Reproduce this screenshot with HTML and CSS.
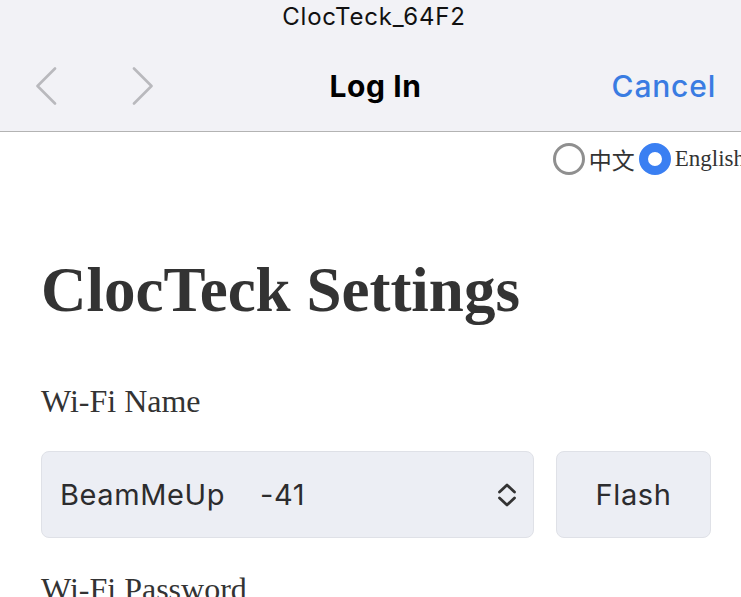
FILE: index.html
```html
<!DOCTYPE html>
<html lang="en">
<head>
<meta charset="utf-8">
<title>ClocTeck Settings</title>
<link rel="stylesheet" href="styles.css">
</head>
<body>
<header class="topbar">
  <div class="status">ClocTeck_64F2</div>
  <nav class="nav">
    <div class="arrows">
      <svg class="chev" width="22" height="38" viewBox="0 0 22 38"><path d="M20 1.5 L2.5 19 L20 36.5" fill="none" stroke="#b9b9bd" stroke-width="2.6" stroke-linecap="round" stroke-linejoin="round"/></svg>
      <svg class="chev" width="22" height="38" viewBox="0 0 22 38"><path d="M2 1.5 L19.5 19 L2 36.5" fill="none" stroke="#b9b9bd" stroke-width="2.6" stroke-linecap="round" stroke-linejoin="round"/></svg>
    </div>
    <div class="nav-title">Log In</div>
    <div class="cancel">Cancel</div>
  </nav>
</header>
<main class="page">
  <div class="lang">
    <label class="opt"><span class="radio"></span>中文</label>
    <label class="opt"><span class="radio on"></span>English</label>
  </div>
  <h1 class="title">ClocTeck Settings</h1>
  <p class="label">Wi-Fi Name</p>
  <div class="row">
    <div class="select">
      <span class="sel-text">BeamMeUp&nbsp;&nbsp;&nbsp;&nbsp;-41</span>
      <svg class="updown" width="20" height="24" viewBox="0 0 20 24"><path d="M2.5 9 L10 2 L17.5 9 M2.5 15 L10 22 L17.5 15" fill="none" stroke="#333" stroke-width="2.8" stroke-linecap="round" stroke-linejoin="round"/></svg>
    </div>
    <button class="btn">Flash</button>
  </div>
  <p class="label">Wi-Fi Password</p>
</main>
</body>
</html>
```
FILE: styles.css
```css
html, body {
  margin: 0;
  padding: 0;
  overflow: hidden;
  background: #ffffff;
}
body {
  font-family: "Liberation Serif", "Times New Roman", serif;
  color: #333333;
}
.topbar {
  background: #f2f2f6;
  border-bottom: 1px solid #b3b3b3;
  font-family: Inter, "Noto Sans", sans-serif;
}
.status {
  height: 36px;
  line-height: 33px;
  font-size: 24px;
  letter-spacing: 0.8px;
  text-align: center;
  color: #111111;
  padding-left: 7px;
}
.nav {
  height: 95px;
  display: grid;
  grid-template-columns: 1fr auto 1fr;
  align-items: center;
  padding: 0 25px 0 35px;
}
.arrows {
  display: flex;
  gap: 75px;
  align-items: center;
  margin-top: 5px;
}
.chev { display: block; }
.nav-title {
  font-size: 30px;
  font-weight: 700;
  letter-spacing: 0.6px;
  color: #000000;
  margin-top: 4px;
}
.cancel {
  justify-self: end;
  font-size: 30px;
  font-weight: 500;
  letter-spacing: 0.8px;
  color: #3a7ce2;
  margin-top: 4px;
}
.page {
  padding: 0 0 0 41px;
}
.lang {
  display: flex;
  justify-content: flex-end;
  align-items: center;
  gap: 4px;
  margin-right: -4px;
  padding-top: 10px;
  font-size: 23px;
  white-space: nowrap;
}
.opt {
  display: flex;
  align-items: center;
  gap: 4px;
  font-family: "Liberation Serif", "Noto Sans CJK SC", serif;
}
.radio {
  width: 32px;
  height: 32px;
  box-sizing: border-box;
  border-radius: 50%;
  border: 3px solid #8f8f8f;
  background: #ffffff;
}
.radio.on {
  border: 9.5px solid #3a7ff2;
  background: #ffffff;
}
.title {
  margin: 78px 0 0 0;
  font-size: 63px;
  line-height: 72px;
  font-weight: 700;
}
.label {
  margin: 57px 0 0 0;
  font-size: 32px;
  line-height: 36px;
}
.row {
  display: flex;
  gap: 22px;
  margin-top: 32px;
}
.select {
  width: 493px;
  height: 87px;
  box-sizing: border-box;
  background: #eceef4;
  border: 1px solid #dfe1e7;
  border-radius: 8px;
  display: flex;
  align-items: center;
  justify-content: space-between;
  padding: 0 16px 0 18px;
  font-family: Inter, "Noto Sans", sans-serif;
  font-size: 29px;
  letter-spacing: 0.6px;
  color: #2c2c2e;
}
.updown { display: block; }
.btn {
  width: 155px;
  height: 87px;
  box-sizing: border-box;
  background: #eceef4;
  border: 1px solid #dfe1e7;
  border-radius: 8px;
  font-family: Inter, "Noto Sans", sans-serif;
  font-size: 29px;
  letter-spacing: 0.6px;
  color: #2c2c2e;
  padding: 0;
}
.row + .label { margin-top: 33px; }
```
